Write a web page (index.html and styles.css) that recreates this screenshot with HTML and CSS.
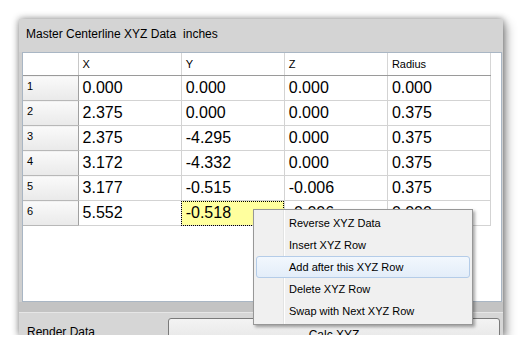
FILE: index.html
```html
<!DOCTYPE html>
<html>
<head>
<meta charset="utf-8">
<link rel="stylesheet" href="styles.css">
</head>
<body>
<div class="window">
  <div class="titlebar"><span>Master Centerline XYZ Data</span><span class="units">inches</span></div>
  <div class="gridwrap">
    <div class="frame">
      <table class="grid">
        <colgroup><col class="c-rh"><col class="c-d"><col class="c-d"><col class="c-d"><col class="c-d"></colgroup>
        <thead>
          <tr><th class="corner"></th><th>X</th><th>Y</th><th>Z</th><th>Radius</th></tr>
        </thead>
        <tbody>
          <tr><th>1</th><td>0.000</td><td>0.000</td><td>0.000</td><td>0.000</td></tr>
          <tr><th>2</th><td>2.375</td><td>0.000</td><td>0.000</td><td>0.375</td></tr>
          <tr><th>3</th><td>2.375</td><td>-4.295</td><td>0.000</td><td>0.375</td></tr>
          <tr><th>4</th><td>3.172</td><td>-4.332</td><td>0.000</td><td>0.375</td></tr>
          <tr><th>5</th><td>3.177</td><td>-0.515</td><td>-0.006</td><td>0.375</td></tr>
          <tr><th>6</th><td>5.552</td><td class="sel">-0.518</td><td>-0.006</td><td>0.000</td></tr>
        </tbody>
      </table>
    </div>
  </div>
  <div class="strip"></div>
  <div class="bottom">
    <span class="label">Render Data</span>
    <div class="button">Calc XYZ</div>
  </div>
  <div class="menu">
    <div class="item">Reverse XYZ Data</div>
    <div class="item">Insert XYZ Row</div>
    <div class="item hot">Add after this XYZ Row</div>
    <div class="item">Delete XYZ Row</div>
    <div class="item">Swap with Next XYZ Row</div>
  </div>
</div>
</body>
</html>
```
FILE: styles.css
```css
html, body { margin: 0; padding: 0; background: #fff; }
body { padding: 19px 0 0 19px; font-family: "Liberation Sans", Arial, sans-serif; }

.window {
  position: relative;
  width: 484px;
  height: 316px;
  background: #d4d4d4;
  box-shadow: 0 0 7px rgba(0,0,0,0.45), 4px 5px 10px rgba(0,0,0,0.3);
}

.titlebar {
  height: 33px;
  box-sizing: border-box;
  padding: 0 0 3px 7px;
  display: flex;
  align-items: center;
  font-size: 12px;
  color: #000;
  background: #d4d4d4;
}
.units { margin-left: 7px; }

.gridwrap {
  padding: 0 1px 0 3px;
  background: #cfcfcf;
}
.frame {
  height: 250px;
  box-sizing: border-box;
  border: 1px solid #a9b6c4;
  background: #fff;
}
.grid {
  border-collapse: collapse;
  table-layout: fixed;
  width: 468px;
}
.c-rh { width: 55px; }
.c-d { width: 103px; }

.grid thead th {
  height: 22px;
  padding: 0 0 0 4px;
  text-align: left;
  font-weight: normal;
  font-size: 11px;
  background: #fff;
  border-right: 1px solid #d6d6d6;
  border-bottom: 1px solid #9a9a9a;
}
.grid thead th.corner { border-right: 1px solid #c8c8c8; }

.grid tbody th {
  height: 20px;
  padding: 0 0 4px 4px;
  text-align: left;
  font-weight: normal;
  font-size: 11px;
  background: linear-gradient(#fafafa, #e9e9e9);
  border-right: 1px solid #a0a0a0;
  border-bottom: 1px solid #b8b8b8;
}
.grid td {
  height: 24px;
  padding: 0 0 0 4px;
  font-size: 16px;
  color: #000;
  border-right: 1px solid #d3d3d3;
  border-bottom: 1px solid #d3d3d3;
  white-space: nowrap;
}
.grid td.sel {
  background: #ffff9e;
  outline: 1px dotted #000;
  outline-offset: -1px;
}

.strip {
  height: 10px;
  background: #c3c3c3;
}
.bottom {
  height: 23px;
  box-sizing: border-box;
  border-top: 1px solid #e6e6e6;
  background: #d6d6d6;
  display: flex;
  align-items: flex-start;
  overflow: hidden;
  padding: 0 3px 0 8px;
}
.bottom .label {
  font-size: 12px;
  margin-top: 12px;
  width: 141px;
}
.button {
  margin-top: 5px;
  flex: 1;
  height: 30px;
  box-sizing: border-box;
  border: 1px solid #7a7a7a;
  border-radius: 3px;
  background: linear-gradient(#f3f3f3, #e4e4e4);
  text-align: center;
  font-size: 12px;
  padding-top: 9px;
}

.menu {
  position: absolute;
  left: 234px;
  top: 190px;
  width: 220px;
  height: 116px;
  box-sizing: border-box;
  padding: 2px;
  background: #f0f0f0 linear-gradient(to right, transparent 29px, #e2e3e3 29px, #e2e3e3 30px, #fff 30px, #fff 31px, transparent 31px);
  border: 1px solid #979797;
  box-shadow: 2px 2px 3px rgba(0,0,0,0.35);
  font-size: 11px;
}
.item {
  height: 22px;
  line-height: 22px;
  padding-left: 33px;
  box-sizing: border-box;
  white-space: nowrap;
}
.item.hot {
  border: 1px solid #b4cce8;
  border-radius: 3px;
  background: linear-gradient(#f2f7fd, #e3edf9);
  line-height: 20px;
  padding-left: 32px;
}
```
